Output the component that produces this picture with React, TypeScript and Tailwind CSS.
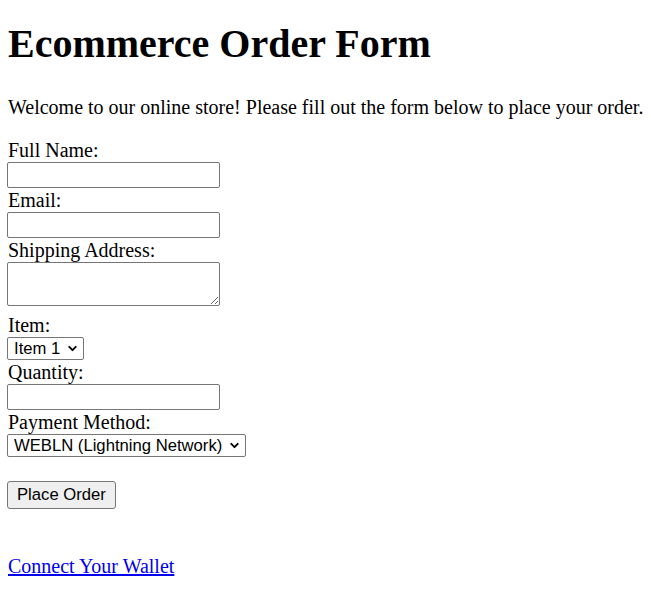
import { ChevronDown } from 'lucide-react'

// plain "browser default" look: serif body, grey-bordered native-ish controls
const field =
  'block w-[213px] h-[26px] border border-[#767676] rounded-[2px] bg-white px-[3px] text-[16.67px] outline-none'

function Select({ options, className }: { options: string[]; className?: string }) {
  return (
    <div
      className={`flex w-fit -ml-[1px] items-center h-[23px] border border-[#767676] rounded-[2px] bg-white pr-[4px] ${className ?? ''}`}
    >
      <select className="appearance-none bg-transparent pl-[6px] pr-[6px] text-[16.67px] leading-[20px] text-black outline-none">
        {options.map(o => (
          <option key={o}>{o}</option>
        ))}
      </select>
      <ChevronDown className="w-[13px] h-[13px] -ml-[1px]" strokeWidth={3.5} />
    </div>
  )
}

export default function App() {
  return (
    <div className="min-h-[607px] bg-white px-[8px] text-black font-['Liberation_Serif',serif]">
      <h1 className="pt-[20px] text-[40px] font-bold leading-[48px]">Ecommerce Order Form</h1>

      <p className="mt-[28px] whitespace-nowrap text-[20px] leading-[23px]">
        Welcome to our online store! Please fill out the form below to place your order.
      </p>

      <form className="mt-[19px] text-[20px] font-['Liberation_Sans',sans-serif]">
        <label className="block font-['Liberation_Serif',serif] leading-[24px]">Full Name:</label>
        <input type="text" className={`-ml-[1px] ${field}`} />

        <label className="block font-['Liberation_Serif',serif] leading-[24px]">Email:</label>
        <input type="email" className={`-ml-[1px] ${field}`} />

        <label className="block font-['Liberation_Serif',serif] leading-[24px]">Shipping Address:</label>
        <textarea className="block -ml-[1px] w-[213px] h-[44px] border border-[#767676] rounded-[2px] bg-white px-[3px] text-[16.67px] outline-none" />

        <label className="block mt-[7px] font-['Liberation_Serif',serif] leading-[24px]">Item:</label>
        <Select options={['Item 1', 'Item 2', 'Item 3']} />

        <label className="block font-['Liberation_Serif',serif] leading-[24px]">Quantity:</label>
        <input type="number" className={`-ml-[1px] ${field}`} />

        <label className="block font-['Liberation_Serif',serif] leading-[24px]">Payment Method:</label>
        <Select options={['WEBLN (Lightning Network)', 'Credit Card', 'PayPal']} />

        <button
          type="button"
          className="block -ml-[1px] mt-[24px] h-[28px] px-[9px] border border-[#767676] rounded-[3px] bg-[#efefef] text-[16.67px] leading-[20px]"
        >
          Place Order
        </button>
      </form>

      <a href="#" className="block mt-[46px] w-fit text-[20px] leading-[23px] text-[#0000ee] underline">
        Connect Your Wallet
      </a>
    </div>
  )
}
